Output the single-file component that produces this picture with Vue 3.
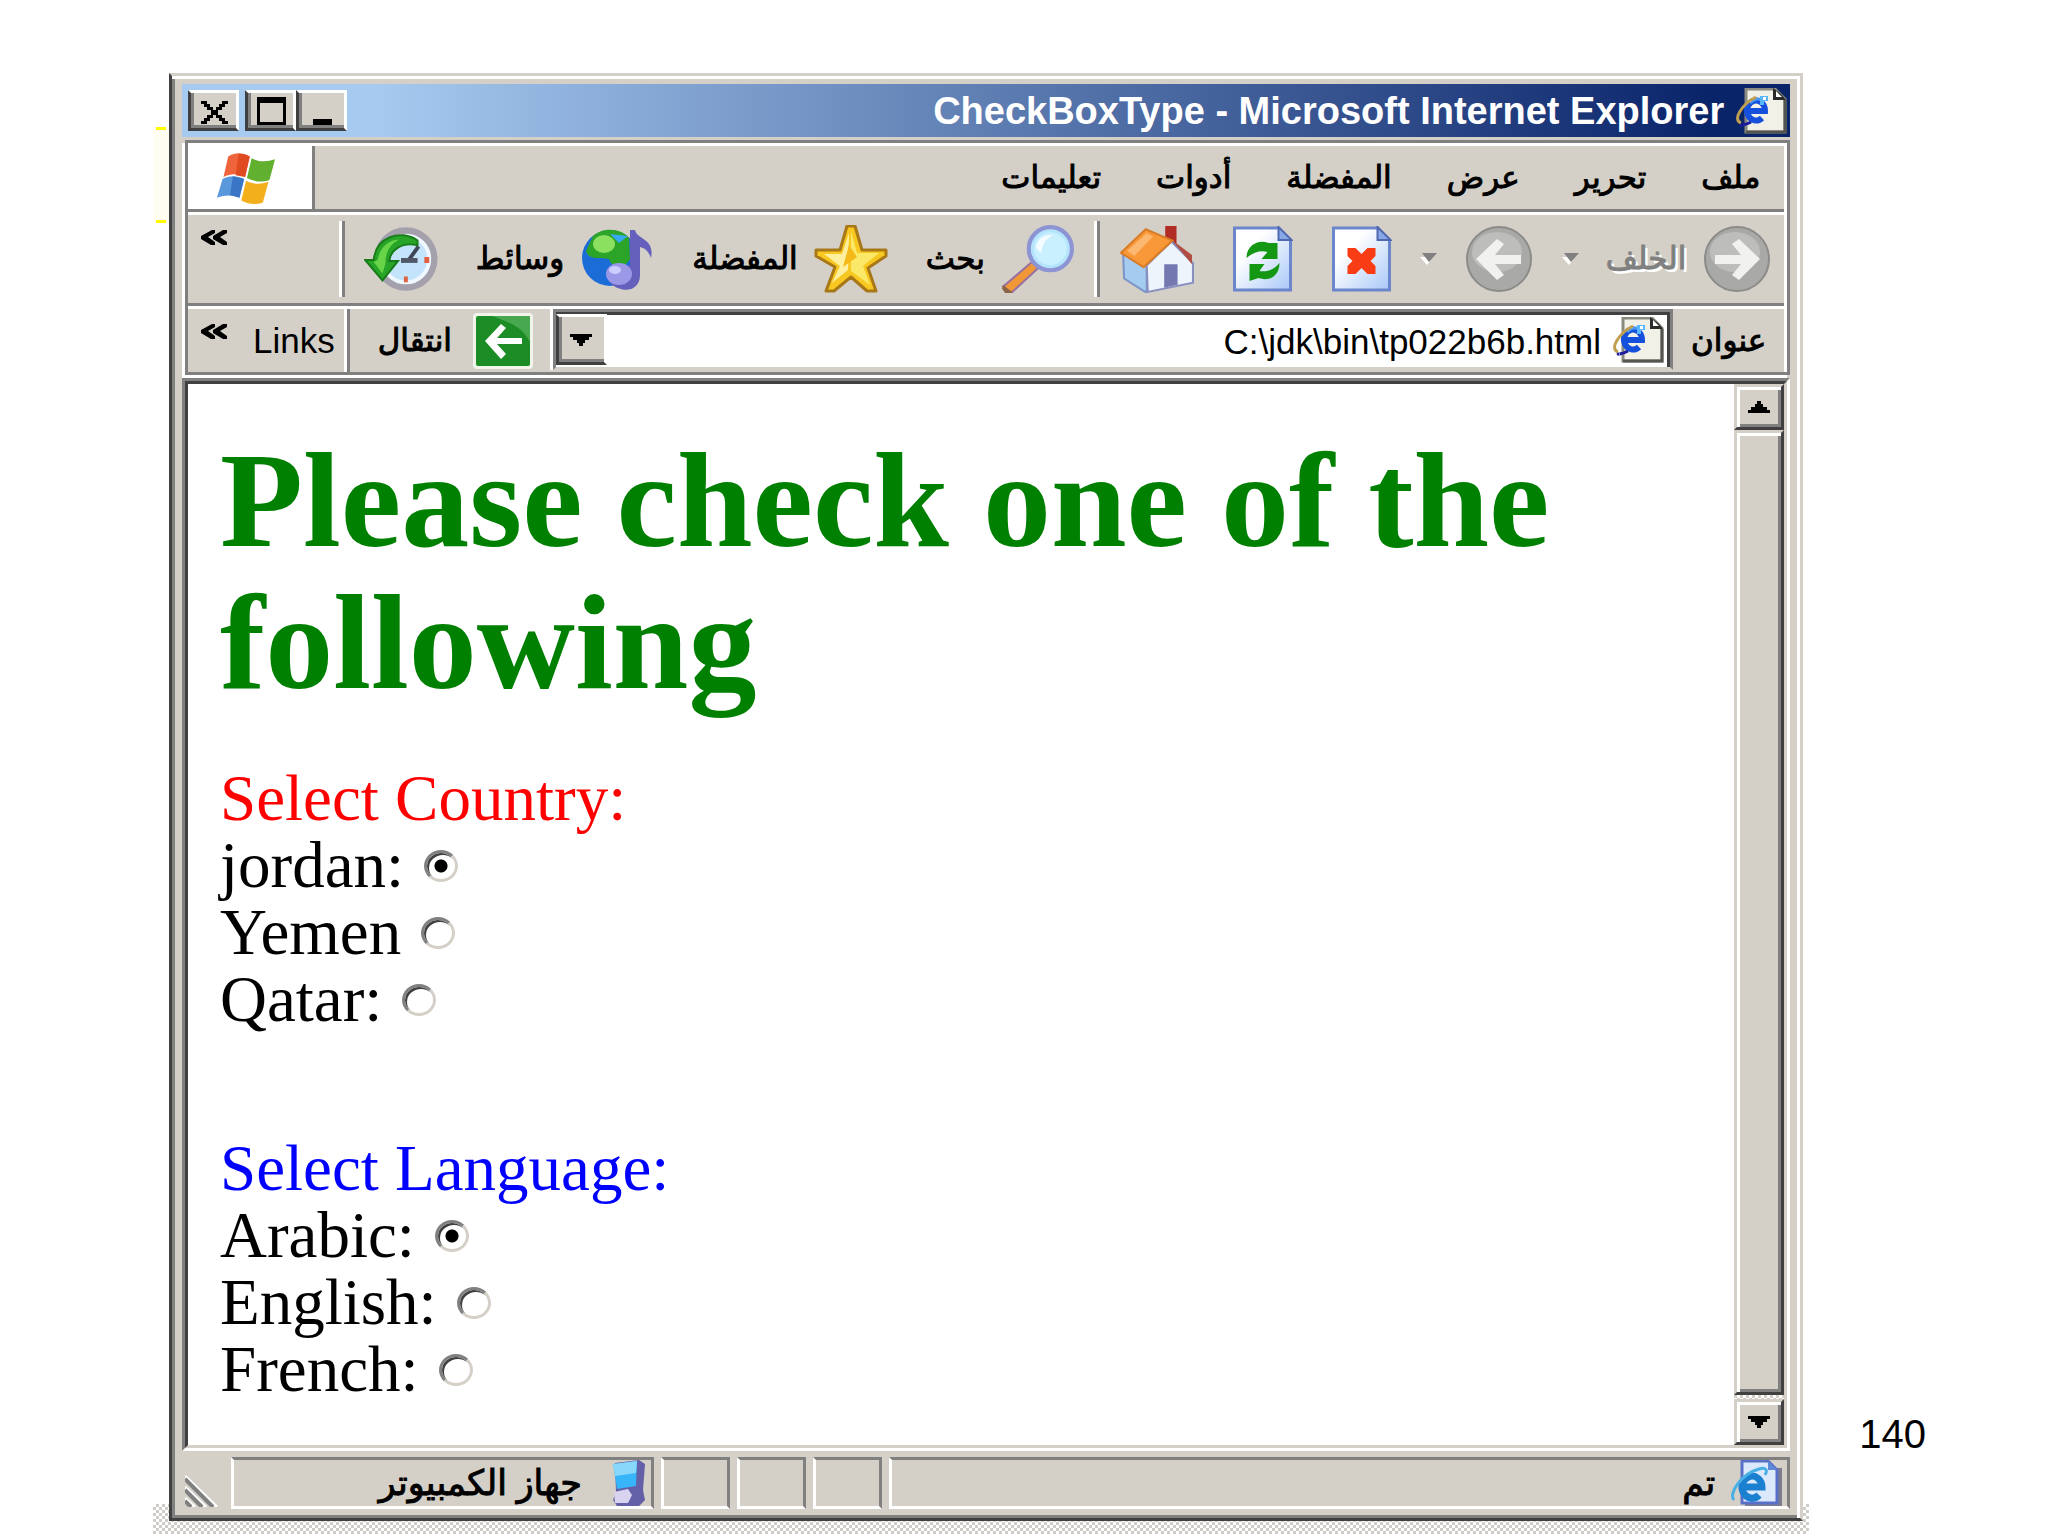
<script setup>
import { ref } from 'vue'

const menus = ['ملف', 'تحرير', 'عرض', 'المفضلة', 'أدوات', 'تعليمات']

const groups = [
  {
    name: 'country',
    title: 'Select Country:',
    color: 'red',
    options: [
      { value: 'jordan', label: 'jordan:' },
      { value: 'yemen', label: 'Yemen' },
      { value: 'qatar', label: 'Qatar:' }
    ]
  },
  {
    name: 'language',
    title: 'Select Language:',
    color: 'blue',
    options: [
      { value: 'arabic', label: 'Arabic:' },
      { value: 'english', label: 'English:' },
      { value: 'french', label: 'French:' }
    ]
  }
]

const selected = ref({ country: 'jordan', language: 'arabic' })
const address = ref('C:\\jdk\\bin\\tp022b6b.html')
</script>
<template>
  <div class="slide">
    <div class="note"></div>
    <div class="holder">
      <div class="window">
        <header class="titlebar" dir="rtl">
          <svg class="page_icon" viewBox="0 0 51 46">
            <symbol id="ie_page" viewBox="0 0 51 46">
              <path d="M10 1h29l10 10v33H10z" fill="#f2f1e8" stroke="#8a8a80" stroke-width="3" />
              <path d="M49 12v32H10" fill="none" stroke="#55554f" stroke-width="3" />
              <path d="M37 0v12h13l-5-6z" fill="#2a2a2a" />
              <path d="M40 3v6h6z" fill="#fff" />
              <path d="M13 23h16a9 10 0 1 0-3 7" fill="none" stroke="#1450dc" stroke-width="6" />
              <path d="M14 15c3-4 8-5 12-3" fill="none" stroke="#4898f8" stroke-width="3" />
              <path d="M5 35C-4 32 6 16 20 9" fill="none" stroke="#c0a050" stroke-width="3" />
              <path d="M6 37c-3 0 2 1 9-3" fill="none" stroke="#1c1c9c" stroke-width="3" />
              <path d="M24 8h8v5h-4v4h-4z" fill="#58b8ff" />
              <path d="M27 9h3v3h-3z" fill="#fff" />
            </symbol>
            <use href="#ie_page" />
          </svg>
          <h1 dir="ltr">CheckBoxType - Microsoft Internet Explorer</h1>
          <div class="controls">
            <button type="button" aria-label="Minimize">
              <svg viewBox="0 0 30 28"><path d="M6 22h19v6H6z" /></svg>
            </button>
            <button type="button" aria-label="Maximize">
              <svg viewBox="0 0 30 28"><path d="M1 0h29v28H1zM4 6v19h23V6z" fill-rule="evenodd" /></svg>
            </button>
            <button type="button" class="close" aria-label="Close">
              <svg viewBox="0 0 30 28">
                <path d="M2 4h6v3h3v3h3v3h3v-3h3V7h3V4h6v3h-3v3h-3v3h-4v5h4v3h3v3h3v3h-6v-3h-3v-3h-3v-3h-3v3h-3v3H8v3H2v-3h3v-3h3v-3h4v-5H8v-3H5V7H2z" />
              </svg>
            </button>
          </div>
        </header>

        <div class="bars" dir="rtl">
          <nav class="menubar">
            <button v-for="menu in menus" :key="menu" type="button">{{ menu }}</button>
            <div class="brand">
              <svg viewBox="0 0 64 56">
                <path d="M13 5c8-5 16-4 23 0l-5 22c-8-4-15-4-23 0z" fill="#f0643c" />
                <path d="M24 2c4 0 8 1 12 3l-5 22-10-2z" fill="#e04a20" />
                <path d="M38 7c8 4 16 4 25 1l-6 22c-8 3-16 2-24-2z" fill="#62b030" />
                <path d="M7 29c7-4 15-4 23 0l-5 20c-8-3-15-3-24 0z" fill="#5a98dc" />
                <path d="M18 26l12 3-5 20-10-3z" fill="#3a74c4" />
                <path d="M32 31c8 4 15 4 24 1l-6 22c-8 3-16 2-23-2z" fill="#f4b01c" />
              </svg>
            </div>
          </nav>

          <div class="toolbar">
            <button type="button" class="tool off">
              <svg class="round" viewBox="0 0 70 66">
                <circle cx="35" cy="33" r="32" fill="#a9a9a7" stroke="#8b8b89" stroke-width="2" />
                <ellipse cx="33" cy="26" rx="25" ry="20" fill="#bdbdbb" />
                <path d="M13 29h26L30 18l7-5 21 20-21 21-7-5 9-11H13z" fill="#f1f1f0" />
              </svg>
              <span>الخلف</span>
            </button>
            <button type="button" class="drop" aria-label="Back list">
              <svg viewBox="0 0 18 12"><path d="M1 4h13l-6 8z" fill="#fff" /><path d="M3 0h15l-8 9z" fill="#808080" /></svg>
            </button>
            <button type="button" class="tool" aria-label="Forward">
              <svg class="round" viewBox="0 0 70 66">
                <circle cx="35" cy="33" r="32" fill="#a9a9a7" stroke="#8b8b89" stroke-width="2" />
                <ellipse cx="33" cy="26" rx="25" ry="20" fill="#bdbdbb" />
                <path d="M57 29H31l9-11-7-5-21 20 21 21 7-5-9-11h26z" fill="#f1f1f0" />
              </svg>
            </button>
            <button type="button" class="drop" aria-label="Forward list">
              <svg viewBox="0 0 18 12"><path d="M1 4h13l-6 8z" fill="#fff" /><path d="M3 0h15l-8 9z" fill="#808080" /></svg>
            </button>
            <div class="tools">
              <button type="button" class="tool" aria-label="Stop">
                <svg class="sheet" viewBox="0 0 60 66">
                  <defs>
                    <linearGradient id="paper" x1="0" y1="0" x2="1" y2="1">
                      <stop offset=".3" stop-color="#fff" />
                      <stop offset="1" stop-color="#a8c8f8" />
                    </linearGradient>
                  </defs>
                  <path d="M2 2h44l12 12v50H2z" fill="url(#paper)" stroke="#6c86cc" stroke-width="3" />
                  <path d="M46 1v13h13z" fill="#88a8e8" stroke="#5068b0" stroke-width="2" />
                  <path d="M16 22h8l6 6 6-6h8v8l-5 5 5 5v8h-8l-6-6-6 6h-8v-8l5-5-5-5z" fill="#f83c14" />
                </svg>
              </button>
              <button type="button" class="tool" aria-label="Refresh">
                <svg class="sheet" viewBox="0 0 60 66">
                  <path d="M2 2h44l12 12v50H2z" fill="url(#paper)" stroke="#6c86cc" stroke-width="3" />
                  <path d="M46 1v13h13z" fill="#88a8e8" stroke="#5068b0" stroke-width="2" />
                  <path d="M14 32c0-12 11-19 22-15h9v16H29l6-7c-7-2-14 0-21 6z" fill="#149814" />
                  <path d="M47 37c0 12-9 19-21 15l-9 3V38h15l-5 7c8 1 14-1 20-8z" fill="#149814" />
                </svg>
              </button>
              <button type="button" class="tool" aria-label="Home">
                <svg class="wide" viewBox="0 0 72 66">
                  <path d="M44 1h11v22l-11-9z" fill="#b02c24" />
                  <path d="M3 28l23 12v26L4 52z" fill="#a4ccf0" stroke="#7c94c8" stroke-width="2" />
                  <path d="M26 39l24-23 21 21v19l-44 9z" fill="#eef4fc" stroke="#8890c0" stroke-width="2" />
                  <path d="M50 14l20 15v9z" fill="#b04c40" />
                  <path d="M1 27L25 4l26 11-28 26z" fill="#f89838" stroke="#d87c28" stroke-width="2" />
                  <path d="M7 25L26 8l6 3-18 19z" fill="#fcb870" />
                  <path d="M43 38h13v20l-13 3z" fill="#7478b0" />
                </svg>
              </button>
            </div>
            <div class="tools split">
              <button type="button" class="tool">
                <svg class="wide" viewBox="0 0 72 66">
                  <path d="M30 36l6 6-26 24-8-6z" fill="#f09838" stroke="#9870a0" stroke-width="2" />
                  <path d="M2 58l10 8-8 0-3-4z" fill="#8c6448" />
                  <circle cx="48" cy="23" r="21" fill="#b4e4fc" stroke="#8c94d4" stroke-width="4" />
                  <circle cx="48" cy="23" r="16" fill="#c8f0ff" />
                  <path d="M34 22c1-9 9-14 17-12-7 3-11 8-12 18z" fill="#f4fcff" />
                </svg>
                <span>بحث</span>
              </button>
              <button type="button" class="tool">
                <svg class="wide" viewBox="0 0 74 68">
                  <path d="M33 1h8l7 24h24v6L54 43l8 23h-9L37 52 20 66h-8l9-24L2 31v-6h24z" fill="#f8c820" stroke="#a87818" stroke-width="3" stroke-linejoin="round" />
                  <path d="M37 6l6 22h22L49 41l7 19-19-14z" fill="#fce868" />
                  <path d="M35 8l-7 21H10l16 12-8 17 16-13z" fill="#fff0a0" />
                  <path d="M35 20l-6 22 14-10z" fill="#f4b818" />
                </svg>
                <span>المفضلة</span>
              </button>
              <button type="button" class="tool">
                <svg class="wide" viewBox="0 0 74 66">
                  <circle cx="30" cy="32" r="28" fill="#1c6cd8" />
                  <path d="M13 10c10-9 28-8 36 2l1 21c-7 12-18 9-21 0-9-2-20 2-23-8z" fill="#2ca428" />
                  <ellipse cx="24" cy="18" rx="11" ry="9" fill="#8ce060" />
                  <path d="M30 8l18 2-9 7z" fill="#38a8f0" />
                  <path d="M50 4h5c2 10 20 8 16 28-3-8-7-10-11-11v28c0 12-10 17-19 14-9-2-16-9-12-18 4-7 13-8 21-5z" fill="#6460bc" />
                  <ellipse cx="39" cy="48" rx="13" ry="11" fill="#9c98e8" />
                  <ellipse cx="35" cy="44" rx="6" ry="4" fill="#ccccff" />
                </svg>
                <span>وسائط</span>
              </button>
              <button type="button" class="tool" aria-label="History">
                <svg class="wide" viewBox="0 0 76 66">
                  <circle cx="43" cy="33" r="29" fill="#c4e4fc" stroke="#a4a0ac" stroke-width="7" />
                  <circle cx="43" cy="33" r="24" fill="none" stroke="#f0f8ff" stroke-width="4" />
                  <path d="M56 20L46 34" fill="none" stroke="#404858" stroke-width="4" />
                  <path d="M38 32h17v5H38z" fill="#505868" />
                  <path d="M62 31h5v6h-5zM41 51h4v6h-4z" fill="#e06040" />
                  <path d="M55 14C38 2 12 10 10 34H1l18 21 16-20H26c1-11 13-20 29-16z" fill="#28a428" stroke="#187c18" stroke-width="2" />
                  <path d="M14 34c2-12 10-20 22-21-9 5-14 12-14 25l-3 10-9-12z" fill="#68d448" />
                </svg>
              </button>
            </div>
            <button type="button" class="more" aria-label="More tools">
              <svg viewBox="0 0 26 15"><path d="M11 0h3v3l-7 4 7 5v3h-4L0 9V6zM22 0h4v3l-7 4 7 5v3h-4L12 9V6z" /></svg>
            </button>
          </div>

          <div class="addressbar">
            <label for="address">عنوان</label>
            <div class="combo">
              <svg class="page_icon" viewBox="0 0 51 46"><use href="#ie_page" /></svg>
              <input id="address" v-model="address" type="text" dir="ltr" />
              <button type="button" aria-label="Address list">
                <svg viewBox="0 0 22 12"><path d="M0 0h22v3h-3v3h-4v3h-2v3H9V9H7V6H3V3H0z" /></svg>
              </button>
            </div>
            <button type="button" class="go">
              <svg viewBox="0 0 62 58">
                <rect x="1" y="1" width="60" height="56" rx="4" fill="#f0f4ea" />
                <rect x="4" y="4" width="54" height="50" rx="2" fill="#1c8c24" />
                <path d="M20 4h38v26C50 14 36 10 20 4z" fill="#48a850" />
                <path d="M50 26H25l9-10-5-4L13 29l16 18 5-5-9-10h25z" fill="#fff" />
              </svg>
              <span>انتقال</span>
            </button>
            <div class="links" dir="ltr">
              <svg viewBox="0 0 26 15"><path d="M11 0h3v3l-7 4 7 5v3h-4L0 9V6zM22 0h4v3l-7 4 7 5v3h-4L12 9V6z" /></svg>
              <span>Links</span>
            </div>
          </div>
        </div>

        <div class="frame">
          <div class="view">
            <main>
              <h2>Please check one of the following</h2>
              <form>
                <fieldset v-for="group in groups" :key="group.name">
                  <legend :class="group.color">{{ group.title }}</legend>
                  <label v-for="option in group.options" :key="option.value">
                    {{ option.label }}
                    <input
                      type="radio"
                      :name="group.name"
                      :value="option.value"
                      v-model="selected[group.name]"
                    />
                  </label>
                </fieldset>
              </form>
            </main>
            <div class="scrollbar">
              <button type="button" aria-label="Scroll up">
                <svg viewBox="0 0 22 12"><path d="M0 12h22V9h-3V6h-4V3h-2V0H9v3H7v3H3v3H0z" /></svg>
              </button>
              <div class="thumb"></div>
              <button type="button" aria-label="Scroll down">
                <svg viewBox="0 0 22 12"><path d="M0 0h22v3h-3v3h-4v3h-2v3H9V9H7V6H3V3H0z" /></svg>
              </button>
            </div>
          </div>
        </div>

        <footer class="statusbar" dir="rtl">
          <div class="panel wide_panel">
            <svg class="page_icon" viewBox="0 0 51 46">
              <path d="M14 8h37v38H14z" fill="#7c7c8c" />
              <path d="M11 1h26l9 9v33H11z" fill="#dce8fc" stroke="#5870c8" stroke-width="3" />
              <path d="M37 1v9h9z" fill="#6088d8" />
              <path d="M13 27h18a10 11 0 1 0-3 8" fill="none" stroke="#1c80d0" stroke-width="7" />
              <path d="M3 40C-3 34 10 14 28 9c7-2 9 1 6 6" fill="none" stroke="#48b0e4" stroke-width="3" />
            </svg>
            <span>تم</span>
          </div>
          <div class="panel small"></div>
          <div class="panel small"></div>
          <div class="panel small"></div>
          <div class="panel zone">
            <svg class="pc_icon" viewBox="0 0 36 46">
              <path d="M5 3l24-3 6 4-2 26 2 10-6 6H7l-4-6 3-8z" fill="#6460a8" />
              <path d="M3 4l24-3-1 25-19 3z" fill="#38b4f8" />
              <path d="M3 4l24-3-1 12-21 3z" fill="#88d8fc" />
              <path d="M4 32l14-3 4 6-4 8H5z" fill="#d8d4f0" />
            </svg>
            <span>جهاز الكمبيوتر</span>
          </div>
          <svg class="grip" viewBox="0 0 34 33">
            <path d="M0 2l32 31M0 13l21 20M0 24l10 9" stroke="#fff" stroke-width="3" />
            <path d="M0 5l28 28M0 16l17 17M0 27l6 6" stroke="#808080" stroke-width="4" />
          </svg>
        </footer>
      </div>
    </div>
    <span class="number">140</span>
  </div>
</template>
<style>
body {
  margin: 0;
  background-color: #fff;
}
</style>
<style scoped>
* {
  box-sizing: border-box;
}

.slide {
  position: relative;
  display: flex;
  align-items: stretch;
  min-height: 100vh;
  padding: 73px 122px 15px 169px;
  font-family: 'Liberation Sans', 'DejaVu Sans', sans-serif;
  color: #000;
}

.note {
  position: absolute;
  top: 127px;
  left: 156px;
  width: 10px;
  height: 96px;
  background-color: #fffdf2;
  border: 3px solid #ffff00;
  border-width: 3px 0;
  box-shadow: -3px 0 0 #fffdf2, 3px 0 0 #fffdf2;
}

.holder {
  position: relative;
  display: flex;
  flex: 1;
}

/* dithered shadow along the bottom edge */
.holder::before {
  content: '';
  position: absolute;
  left: -16px;
  right: -6px;
  bottom: -13px;
  height: 30px;
  background: repeating-conic-gradient(#d0cdc8 0 25%, #fff 0 50%) 0 0 / 6px 6px;
}

.window {
  position: relative;
  display: flex;
  flex-direction: column;
  flex: 1;
  padding: 8px 10px 9px;
  background-color: #d4d0c8;
  border: 3px solid;
  border-color: #d4d0c8 #d4d0c8 #404040 #404040;
  box-shadow: inset -3px 3px 0 #fff, inset 3px -3px 0 #808080;
}

button {
  flex: none;
  margin: 0;
  padding: 0;
  border: none;
  background: none;
  color: inherit;
  font: inherit;
}

svg {
  display: block;
  flex: none;
}

.page_icon {
  width: 51px;
  height: 46px;
}

.titlebar {
  display: flex;
  align-items: center;
  height: 53px;
  padding: 0 3px 0 6px;
  background: linear-gradient(to right, #a6caf0 12%, #0a246a 95%);
  color: #fff;
}

.titlebar h1 {
  flex: 1;
  margin: 0 12px 0 0;
  font-size: 38px;
  line-height: 44px;
  text-align: right;
  white-space: nowrap;
}

.controls {
  display: flex;
}

.controls button,
.combo button {
  display: flex;
  align-items: center;
  justify-content: center;
  width: 51px;
  height: 41px;
  background-color: #d4d0c8;
  border: 3px solid;
  border-color: #fff #fff #404040 #404040;
  box-shadow: inset 3px -3px 0 #808080;
}

.controls .close {
  margin-right: 6px;
}

.controls svg {
  width: 30px;
  height: 28px;
}

.bars {
  margin: 3px 0 0 3px;
  padding: 3px 0 0;
  border: 3px solid #808080;
  box-shadow: inset -3px 3px 0 #fff, -3px 3px 0 #fff;
  font-size: 31px;
  line-height: 40px;
  -webkit-text-stroke: 1px;
}

.menubar,
.toolbar,
.addressbar {
  display: flex;
  align-items: center;
  margin-right: 3px;
}

.menubar {
  gap: 55px;
  height: 66px;
  padding-right: 24px;
  border-bottom: 3px solid #808080;
}

.brand {
  display: flex;
  align-items: center;
  width: 127px;
  height: 63px;
  margin-right: auto;
  padding-right: 36px;
  background-color: #fff;
  border-right: 3px solid #808080;
  box-shadow: inset -3px 0 0 #fff;
}

.brand svg {
  width: 60px;
  height: 54px;
}

.toolbar {
  height: 94px;
  padding-right: 12px;
  border-top: 3px solid #fff;
  border-bottom: 3px solid #808080;
}

.tool {
  display: flex;
  align-items: center;
  gap: 16px;
}

.off {
  color: #808080;
  text-shadow: 3px 3px 0 #fff;
}

.round {
  width: 70px;
  height: 66px;
}

.sheet {
  width: 61px;
  height: 66px;
}

.wide {
  width: 74px;
  height: 68px;
}

.drop {
  padding: 0 27px;
}

.drop svg {
  width: 18px;
  height: 12px;
}

.tools {
  display: flex;
  gap: 38px;
  padding-left: 20px;
}

.split {
  height: 76px;
  align-items: center;
  padding: 0 22px 0 19px;
  border: 3px solid #808080;
  border-width: 0 3px;
  box-shadow: -3px 0 0 #fff, inset -3px 0 0 #fff;
}

.more {
  align-self: flex-start;
  margin: 15px auto 0 13px;
}

.more svg,
.links svg {
  width: 26px;
  height: 15px;
}

.addressbar {
  height: 66px;
  border-top: 3px solid #fff;
}

.addressbar label {
  padding: 0 18px;
}

.combo {
  display: flex;
  align-items: center;
  flex: 1;
  height: 61px;
  margin-bottom: 2px;
  padding-right: 6px;
  background-color: #fff;
  border: 3px solid;
  border-color: #808080 #808080 #d4d0c8 #808080;
  box-shadow: inset -3px 3px 0 #404040, -3px 0 0 #fff;
}

.combo input {
  flex: 1;
  min-width: 0;
  height: 48px;
  margin: 0;
  padding: 4px 12px 0;
  border: none;
  outline: none;
  background: none;
  font: 35px/44px 'Liberation Sans', sans-serif;
  text-align: right;
  -webkit-text-stroke: 0;
}

.combo button {
  height: 51px;
}

.combo button svg,
.scrollbar svg {
  width: 22px;
  height: 12px;
}

.go {
  display: flex;
  align-items: center;
  gap: 20px;
  padding: 0 19px 0 28px;
}

.go svg {
  width: 62px;
  height: 58px;
}

.links {
  display: flex;
  gap: 26px;
  height: 63px;
  padding: 12px 12px 0 13px;
  border-right: 3px solid #808080;
  box-shadow: inset -3px 0 0 #fff;
  font-size: 35px;
  -webkit-text-stroke: 0;
}

.links svg {
  margin-top: 3px;
}

.frame {
  display: flex;
  flex: 1;
  margin-top: 3px;
  border: 3px solid;
  border-color: #808080 #fff #fff #808080;
}

.view {
  display: flex;
  flex: 1;
  background-color: #fff;
  border: 3px solid;
  border-color: #404040 #d4d0c8 #d4d0c8 #404040;
}

main {
  flex: 1;
  padding: 45px 32px 20px;
  font-family: 'Liberation Serif', serif;
}

h2 {
  margin: 0 0 52px;
  color: #008000;
  font-size: 136px;
  font-weight: 700;
  line-height: 142px;
}

form {
  display: flex;
  flex-direction: column;
  gap: 102px;
  font-size: 65px;
  line-height: 67px;
}

fieldset {
  min-width: 0;
  margin: 0;
  padding: 0;
  border: none;
}

legend {
  padding: 0;
}

.red {
  color: #ff0000;
}

.blue {
  color: #0000ff;
}

main label {
  display: flex;
  align-items: center;
  gap: 20px;
}

main input {
  appearance: none;
  width: 34px;
  height: 32px;
  margin: 0;
  background-color: #fff;
  border: 3px solid;
  border-color: #808080 #d4d0c8 #d4d0c8 #808080;
  border-radius: 50%;
  box-shadow: inset 2px 2px 0 #404040;
}

main input:checked {
  background-image: radial-gradient(circle, #000 6px, transparent 7px);
}

.scrollbar {
  display: flex;
  flex-direction: column;
  width: 50px;
  background: repeating-conic-gradient(#d4d0c8 0 25%, #fff 0 50%) 0 0 / 6px 6px;
}

.scrollbar button,
.thumb {
  display: flex;
  align-items: center;
  justify-content: center;
  height: 46px;
  background-color: #d4d0c8;
  border: 3px solid;
  border-color: #d4d0c8 #404040 #404040 #d4d0c8;
  box-shadow: inset 3px 3px 0 #fff, inset -3px -3px 0 #808080;
}

.scrollbar .thumb {
  flex: 1;
  margin-bottom: 4px;
}

.statusbar {
  display: flex;
  align-items: flex-end;
  gap: 7px;
  height: 52px;
  margin-top: 6px;
  font-size: 35px;
  line-height: 40px;
  -webkit-text-stroke: 1px;
}

.panel {
  display: flex;
  align-items: center;
  gap: 16px;
  height: 52px;
  padding: 0 5px;
  border: 3px solid;
  border-color: #808080 #808080 #fff #fff;
}

.wide_panel {
  flex: 1;
}

.small {
  width: 69px;
}

.zone {
  width: 423px;
  gap: 28px;
}

.pc_icon {
  width: 36px;
  height: 46px;
}

.grip {
  width: 34px;
  height: 33px;
  margin: 0 5px 2px 3px;
}

.number {
  align-self: flex-end;
  margin: 0 0 64px 56px;
  font-size: 40px;
  line-height: 46px;
}
</style>
